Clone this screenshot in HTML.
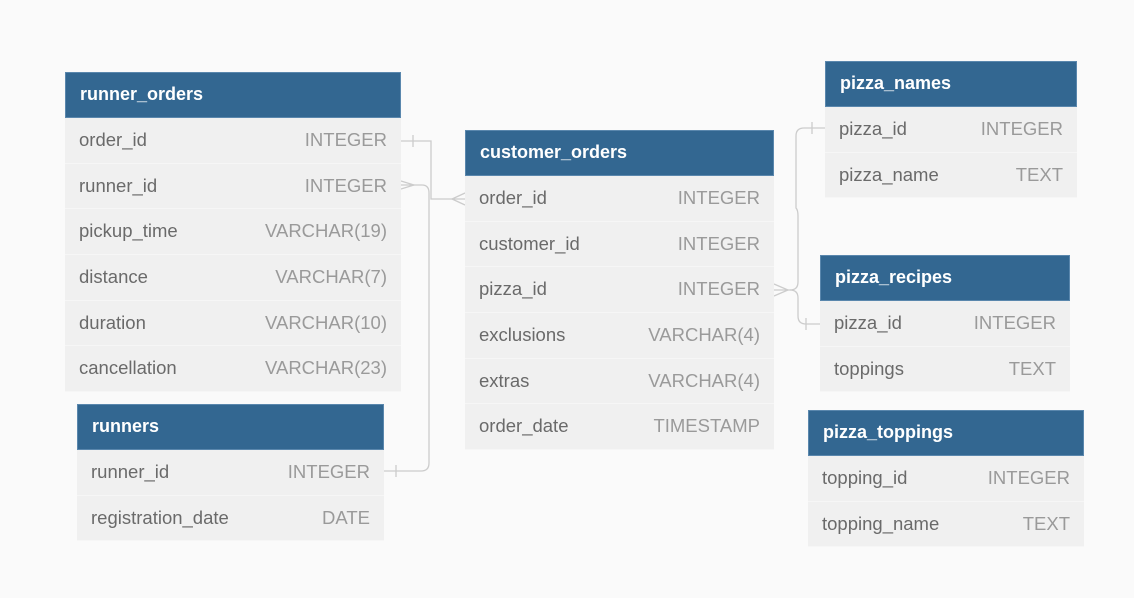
<!DOCTYPE html><html><head><style>
body{margin:0;width:1134px;height:598px;background:#fafafa;position:relative;overflow:hidden;font-family:"Liberation Sans",sans-serif}
.t{position:absolute;background:#f0f0f0}
.h{background:#336791;color:#fff;font-weight:bold;font-size:18px;height:46px;line-height:43px;padding-left:14px;border:1px solid #5a87ad;box-sizing:border-box}
.r{height:45.7px;line-height:44px;font-size:18.5px;color:#6a6a6a;padding:0 14px;display:flex;justify-content:space-between;border-bottom:1px solid #f6f6f6;box-sizing:border-box}
.r span:last-child{color:#9a9a9a}
svg{position:absolute;left:0;top:0}
</style></head><body>
<svg width="1134" height="598" fill="none" stroke="#ccc" stroke-width="1.3">
<path d="M401 141H431V199H465"/><path d="M413 135V147"/><path d="M465 193L452 199L465 205"/>
<path d="M401 181L414 185L401 189"/><path d="M401 185H422Q429 185 429 193V463Q429 471 421 471H384"/><path d="M396 465V477"/>
<path d="M774 284L788 290L774 296"/><path d="M774 290H790Q798 290 798 282V216Q798 210 796 208V136Q796 128 804 128H825"/><path d="M812 122V134"/>
<path d="M790 290Q798 290 798 298V316Q798 324 806 324H820"/><path d="M806 318V330"/>
</svg>
<div class="t" style="left:65px;top:72px;width:336px"><div class="h">runner_orders</div>
<div class="r"><span>order_id</span><span>INTEGER</span></div><div class="r"><span>runner_id</span><span>INTEGER</span></div><div class="r"><span>pickup_time</span><span>VARCHAR(19)</span></div><div class="r"><span>distance</span><span>VARCHAR(7)</span></div><div class="r"><span>duration</span><span>VARCHAR(10)</span></div><div class="r"><span>cancellation</span><span>VARCHAR(23)</span></div></div>
<div class="t" style="left:77px;top:404px;width:307px"><div class="h">runners</div>
<div class="r"><span>runner_id</span><span>INTEGER</span></div><div class="r"><span>registration_date</span><span>DATE</span></div></div>
<div class="t" style="left:465px;top:130px;width:309px"><div class="h">customer_orders</div>
<div class="r"><span>order_id</span><span>INTEGER</span></div><div class="r"><span>customer_id</span><span>INTEGER</span></div><div class="r"><span>pizza_id</span><span>INTEGER</span></div><div class="r"><span>exclusions</span><span>VARCHAR(4)</span></div><div class="r"><span>extras</span><span>VARCHAR(4)</span></div><div class="r"><span>order_date</span><span>TIMESTAMP</span></div></div>
<div class="t" style="left:825px;top:61px;width:252px"><div class="h">pizza_names</div>
<div class="r"><span>pizza_id</span><span>INTEGER</span></div><div class="r"><span>pizza_name</span><span>TEXT</span></div></div>
<div class="t" style="left:820px;top:255px;width:250px"><div class="h">pizza_recipes</div>
<div class="r"><span>pizza_id</span><span>INTEGER</span></div><div class="r"><span>toppings</span><span>TEXT</span></div></div>
<div class="t" style="left:808px;top:410px;width:276px"><div class="h">pizza_toppings</div>
<div class="r"><span>topping_id</span><span>INTEGER</span></div><div class="r"><span>topping_name</span><span>TEXT</span></div></div>
</body></html>
